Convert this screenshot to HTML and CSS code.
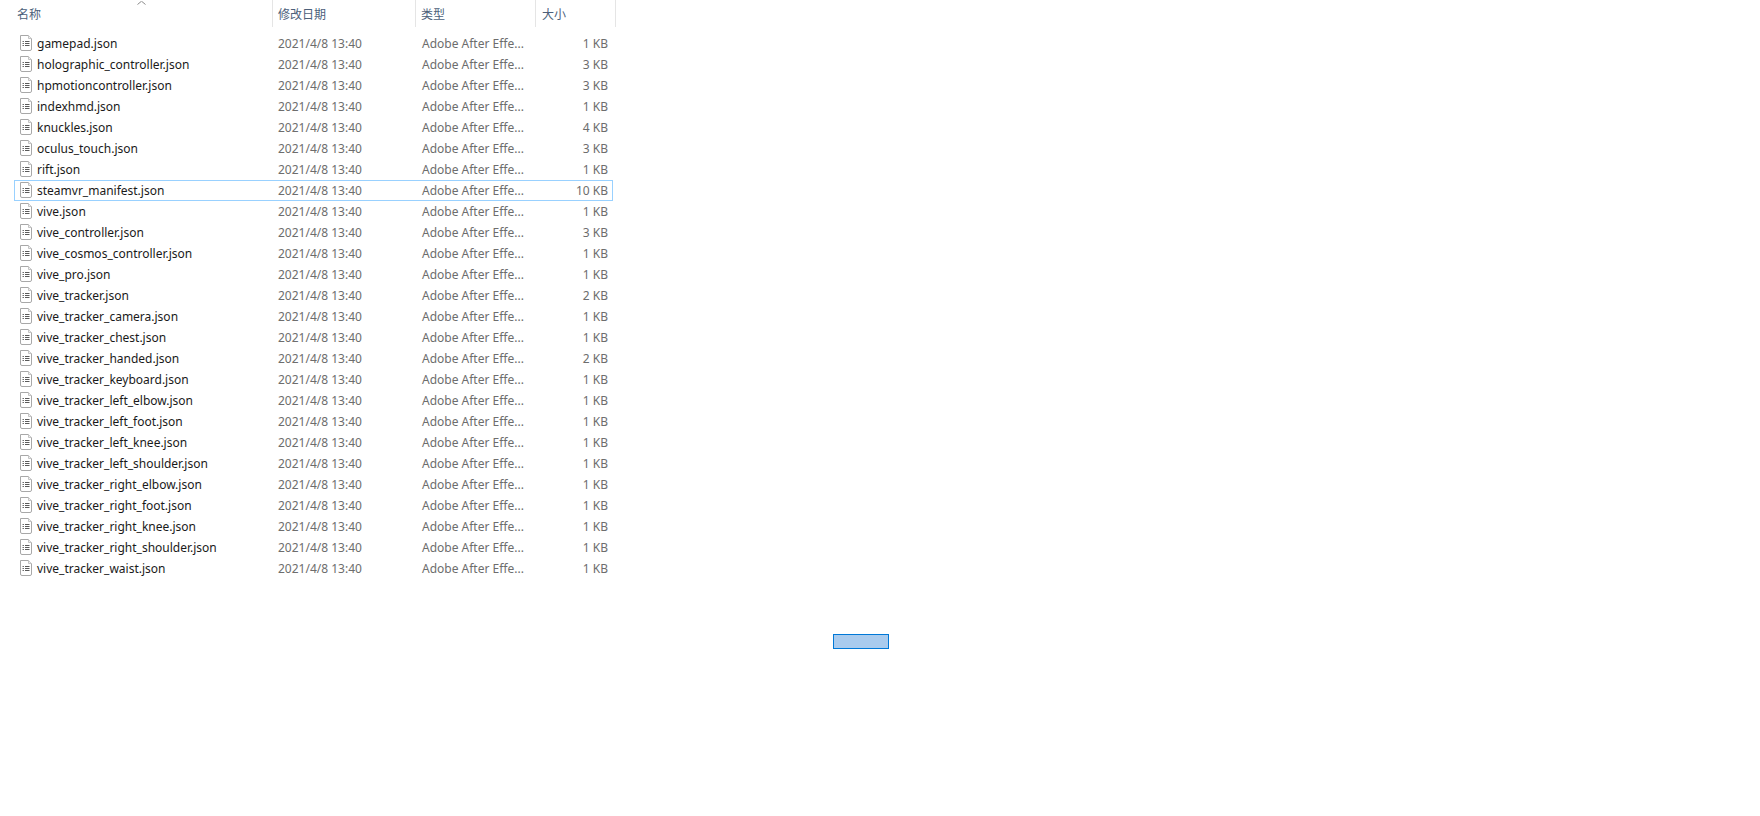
FILE: index.html
```html
<!DOCTYPE html>
<html lang="zh">
<head>
<meta charset="utf-8">
<title>Files</title>
<link rel="stylesheet" href="styles.css">
</head>
<body>
<svg class="defs" width="0" height="0"><symbol id="doc" viewBox="0 0 14 16"><path d="M1.5 .5H9.5L12.5 3.5V14Q12.500 15.500 11 15.500H3Q1.500 15.500 1.500 14Z" fill="#fff" stroke="#a8a8a8"/><path d="M9.500 .5V3.500H12.500" fill="#f0f0f0" stroke="#c4c4c4"/><path d="M6 6.500H10.500M6 8.500H10.500M6 10.500H10.500" stroke="#5a5a5a"/><path d="M3.500 6.500H5M3.500 8.500H5M3.500 10.500H5" stroke="#6e6e6e"/></symbol></svg>
<header class="head">
  <div class="hcol hname">名称<span class="sort"><svg width="9" height="4" viewBox="0 0 9 4"><path d="M.5 3.500L4.500 .2L8.500 3.500" fill="none" stroke="#8c8c8c"/></svg></span></div>
  <div class="hcol hdate">修改日期</div>
  <div class="hcol htype">类型</div>
  <div class="hcol hsize">大小</div>
</header>
<main class="list">
  <div class="row"><span class="name"><svg class="ico"><use href="#doc"/></svg>gamepad.json</span><span class="date">2021/4/8 13:40</span><span class="type">Adobe After Effe...</span><span class="size">1 KB</span></div>
  <div class="row"><span class="name"><svg class="ico"><use href="#doc"/></svg>holographic_controller.json</span><span class="date">2021/4/8 13:40</span><span class="type">Adobe After Effe...</span><span class="size">3 KB</span></div>
  <div class="row"><span class="name"><svg class="ico"><use href="#doc"/></svg>hpmotioncontroller.json</span><span class="date">2021/4/8 13:40</span><span class="type">Adobe After Effe...</span><span class="size">3 KB</span></div>
  <div class="row"><span class="name"><svg class="ico"><use href="#doc"/></svg>indexhmd.json</span><span class="date">2021/4/8 13:40</span><span class="type">Adobe After Effe...</span><span class="size">1 KB</span></div>
  <div class="row"><span class="name"><svg class="ico"><use href="#doc"/></svg>knuckles.json</span><span class="date">2021/4/8 13:40</span><span class="type">Adobe After Effe...</span><span class="size">4 KB</span></div>
  <div class="row"><span class="name"><svg class="ico"><use href="#doc"/></svg>oculus_touch.json</span><span class="date">2021/4/8 13:40</span><span class="type">Adobe After Effe...</span><span class="size">3 KB</span></div>
  <div class="row"><span class="name"><svg class="ico"><use href="#doc"/></svg>rift.json</span><span class="date">2021/4/8 13:40</span><span class="type">Adobe After Effe...</span><span class="size">1 KB</span></div>
  <div class="row focused"><span class="name"><svg class="ico"><use href="#doc"/></svg>steamvr_manifest.json</span><span class="date">2021/4/8 13:40</span><span class="type">Adobe After Effe...</span><span class="size">10 KB</span></div>
  <div class="row"><span class="name"><svg class="ico"><use href="#doc"/></svg>vive.json</span><span class="date">2021/4/8 13:40</span><span class="type">Adobe After Effe...</span><span class="size">1 KB</span></div>
  <div class="row"><span class="name"><svg class="ico"><use href="#doc"/></svg>vive_controller.json</span><span class="date">2021/4/8 13:40</span><span class="type">Adobe After Effe...</span><span class="size">3 KB</span></div>
  <div class="row"><span class="name"><svg class="ico"><use href="#doc"/></svg>vive_cosmos_controller.json</span><span class="date">2021/4/8 13:40</span><span class="type">Adobe After Effe...</span><span class="size">1 KB</span></div>
  <div class="row"><span class="name"><svg class="ico"><use href="#doc"/></svg>vive_pro.json</span><span class="date">2021/4/8 13:40</span><span class="type">Adobe After Effe...</span><span class="size">1 KB</span></div>
  <div class="row"><span class="name"><svg class="ico"><use href="#doc"/></svg>vive_tracker.json</span><span class="date">2021/4/8 13:40</span><span class="type">Adobe After Effe...</span><span class="size">2 KB</span></div>
  <div class="row"><span class="name"><svg class="ico"><use href="#doc"/></svg>vive_tracker_camera.json</span><span class="date">2021/4/8 13:40</span><span class="type">Adobe After Effe...</span><span class="size">1 KB</span></div>
  <div class="row"><span class="name"><svg class="ico"><use href="#doc"/></svg>vive_tracker_chest.json</span><span class="date">2021/4/8 13:40</span><span class="type">Adobe After Effe...</span><span class="size">1 KB</span></div>
  <div class="row"><span class="name"><svg class="ico"><use href="#doc"/></svg>vive_tracker_handed.json</span><span class="date">2021/4/8 13:40</span><span class="type">Adobe After Effe...</span><span class="size">2 KB</span></div>
  <div class="row"><span class="name"><svg class="ico"><use href="#doc"/></svg>vive_tracker_keyboard.json</span><span class="date">2021/4/8 13:40</span><span class="type">Adobe After Effe...</span><span class="size">1 KB</span></div>
  <div class="row"><span class="name"><svg class="ico"><use href="#doc"/></svg>vive_tracker_left_elbow.json</span><span class="date">2021/4/8 13:40</span><span class="type">Adobe After Effe...</span><span class="size">1 KB</span></div>
  <div class="row"><span class="name"><svg class="ico"><use href="#doc"/></svg>vive_tracker_left_foot.json</span><span class="date">2021/4/8 13:40</span><span class="type">Adobe After Effe...</span><span class="size">1 KB</span></div>
  <div class="row"><span class="name"><svg class="ico"><use href="#doc"/></svg>vive_tracker_left_knee.json</span><span class="date">2021/4/8 13:40</span><span class="type">Adobe After Effe...</span><span class="size">1 KB</span></div>
  <div class="row"><span class="name"><svg class="ico"><use href="#doc"/></svg>vive_tracker_left_shoulder.json</span><span class="date">2021/4/8 13:40</span><span class="type">Adobe After Effe...</span><span class="size">1 KB</span></div>
  <div class="row"><span class="name"><svg class="ico"><use href="#doc"/></svg>vive_tracker_right_elbow.json</span><span class="date">2021/4/8 13:40</span><span class="type">Adobe After Effe...</span><span class="size">1 KB</span></div>
  <div class="row"><span class="name"><svg class="ico"><use href="#doc"/></svg>vive_tracker_right_foot.json</span><span class="date">2021/4/8 13:40</span><span class="type">Adobe After Effe...</span><span class="size">1 KB</span></div>
  <div class="row"><span class="name"><svg class="ico"><use href="#doc"/></svg>vive_tracker_right_knee.json</span><span class="date">2021/4/8 13:40</span><span class="type">Adobe After Effe...</span><span class="size">1 KB</span></div>
  <div class="row"><span class="name"><svg class="ico"><use href="#doc"/></svg>vive_tracker_right_shoulder.json</span><span class="date">2021/4/8 13:40</span><span class="type">Adobe After Effe...</span><span class="size">1 KB</span></div>
  <div class="row"><span class="name"><svg class="ico"><use href="#doc"/></svg>vive_tracker_waist.json</span><span class="date">2021/4/8 13:40</span><span class="type">Adobe After Effe...</span><span class="size">1 KB</span></div>
</main>
<div class="marquee"></div>
</body>
</html>
```
FILE: styles.css
```css
html, body {
  margin: 0;
  height: 100%;
  background: #fff;
  overflow: hidden;
}
body {
  font-family: "Noto Sans", "Noto Sans CJK SC", sans-serif;
  font-size: 12px;
  color: #1a1a1a;
}
.defs { position: absolute; }
.head {
  display: flex;
  height: 27px;
  width: 616px;
  color: #4c607a;
}
.hcol {
  box-sizing: border-box;
  height: 27px;
  line-height: 27px;
  border-right: 1px solid #e5e5e5;
  font-family: "Noto Sans CJK SC", sans-serif;
}
.hname { position: relative; width: 273px; padding-left: 17px; }
.hdate { width: 143px; padding-left: 5px; }
.htype { width: 120px; padding-left: 5px; }
.hsize { width: 80px; padding-left: 6px; }
.sort { position: absolute; left: 137px; top: 0; line-height: 0; }
.list {
  display: flex;
  flex-direction: column;
  padding: 6px 0 0 14px;
  width: 600px;
}
.row {
  box-sizing: border-box;
  display: flex;
  align-items: center;
  height: 21px;
  width: 599px;
  line-height: 19px;
  border: 1px solid transparent;
}
.focused { border-color: #99d1ff; }
.name {
  display: flex;
  align-items: center;
  width: 263px;
  white-space: nowrap;
}
.ico {
  width: 14px;
  height: 16px;
  margin: -2px 4px 0 4px;
  flex: none;
}
.date, .type, .size { color: #6d6d6d; }
.date { width: 144px; }
.type { width: 116px; white-space: nowrap; }
.size { width: 70px; text-align: right; }
.marquee {
  position: absolute;
  left: 833px;
  top: 634px;
  width: 54px;
  height: 13px;
  background: #a9cbee;
  border: 1px solid #0078d7;
}
```
